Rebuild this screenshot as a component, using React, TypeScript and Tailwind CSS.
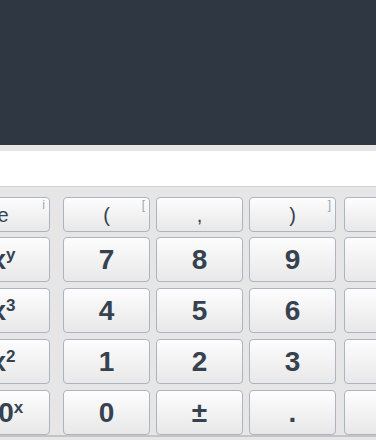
import type { ReactNode } from "react";

type KeyProps = {
  label: ReactNode;
  sup?: string;
  className?: string;
  small?: boolean;
};

function Key({ label, sup, className = "", small }: KeyProps) {
  return (
    <button
      type="button"
      className={
        "relative flex w-[87px] shrink-0 items-center justify-center rounded-[4px] border border-[#a9b5c1] bg-linear-to-b from-[#fdfdfd] to-[#e8e8e8] text-[#36424f] shadow-[inset_0_1px_0_#ffffff] " +
        (small ? "text-[20px] font-normal text-[#3c4e62] " : "text-[28px] font-bold ") +
        className
      }
    >
      <span className="leading-none">{label}</span>
      {sup && (
        <span className="absolute right-[4px] top-[1px] text-[12px] font-normal leading-none text-[#98a6b3]">
          {sup}
        </span>
      )}
    </button>
  );
}

const sci = (base: string, exp: string) => (
  <span>
    {base}
    <sup className="text-[17px]">{exp}</sup>
  </span>
);

export default function App() {
  // col 4 (operators) sits past the right edge, so its labels stay blank
  const rows: { h: string; keys: KeyProps[] }[] = [
    {
      h: "h-[35px]",
      keys: [
        { label: "e", sup: "i", small: true },
        { label: "(", sup: "[", small: true },
        { label: ",", small: true },
        { label: ")", sup: "]", small: true },
        { label: "", small: true },
      ],
    },
    {
      h: "h-[45px]",
      keys: [{ label: sci("x", "y") }, { label: "7" }, { label: "8" }, { label: "9" }, { label: "" }],
    },
    {
      h: "h-[45px]",
      keys: [{ label: sci("x", "3") }, { label: "4" }, { label: "5" }, { label: "6" }, { label: "" }],
    },
    {
      h: "h-[45px]",
      keys: [{ label: sci("x", "2") }, { label: "1" }, { label: "2" }, { label: "3" }, { label: "" }],
    },
    {
      h: "h-[45px]",
      keys: [{ label: sci("10", "x") }, { label: "0" }, { label: "±" }, { label: "." }, { label: "" }],
    },
  ];
  const gaps = ["pr-[7px]", "ml-[13px]", "ml-[6px]", "ml-[6px]", "ml-[8px]"];

  return (
    <div className="h-[440px] w-[376px] overflow-hidden bg-[#e6e6e6] font-['Liberation_Sans',Arial,sans-serif]">
      {/* display */}
      <div className="h-[145px] bg-[#2e3742]" />
      <div className="pt-[6px]">
        <div className="h-[36px] border-b border-[#d2d2d2] bg-white" />
      </div>

      {/* keypad */}
      <div className="flex flex-col pt-[10px]">
        {rows.map((row, r) => (
          <div key={r} className={"ml-[-37px] flex " + (r === 0 ? "mb-[5px]" : r < 4 ? "mb-[6px]" : "")}>
            {row.keys.map((k, i) => (
              <Key key={i} {...k} className={row.h + " " + gaps[i]} />
            ))}
          </div>
        ))}
      </div>
      <div className="h-[2px] bg-[#c4c4c4]" />
    </div>
  );
}
